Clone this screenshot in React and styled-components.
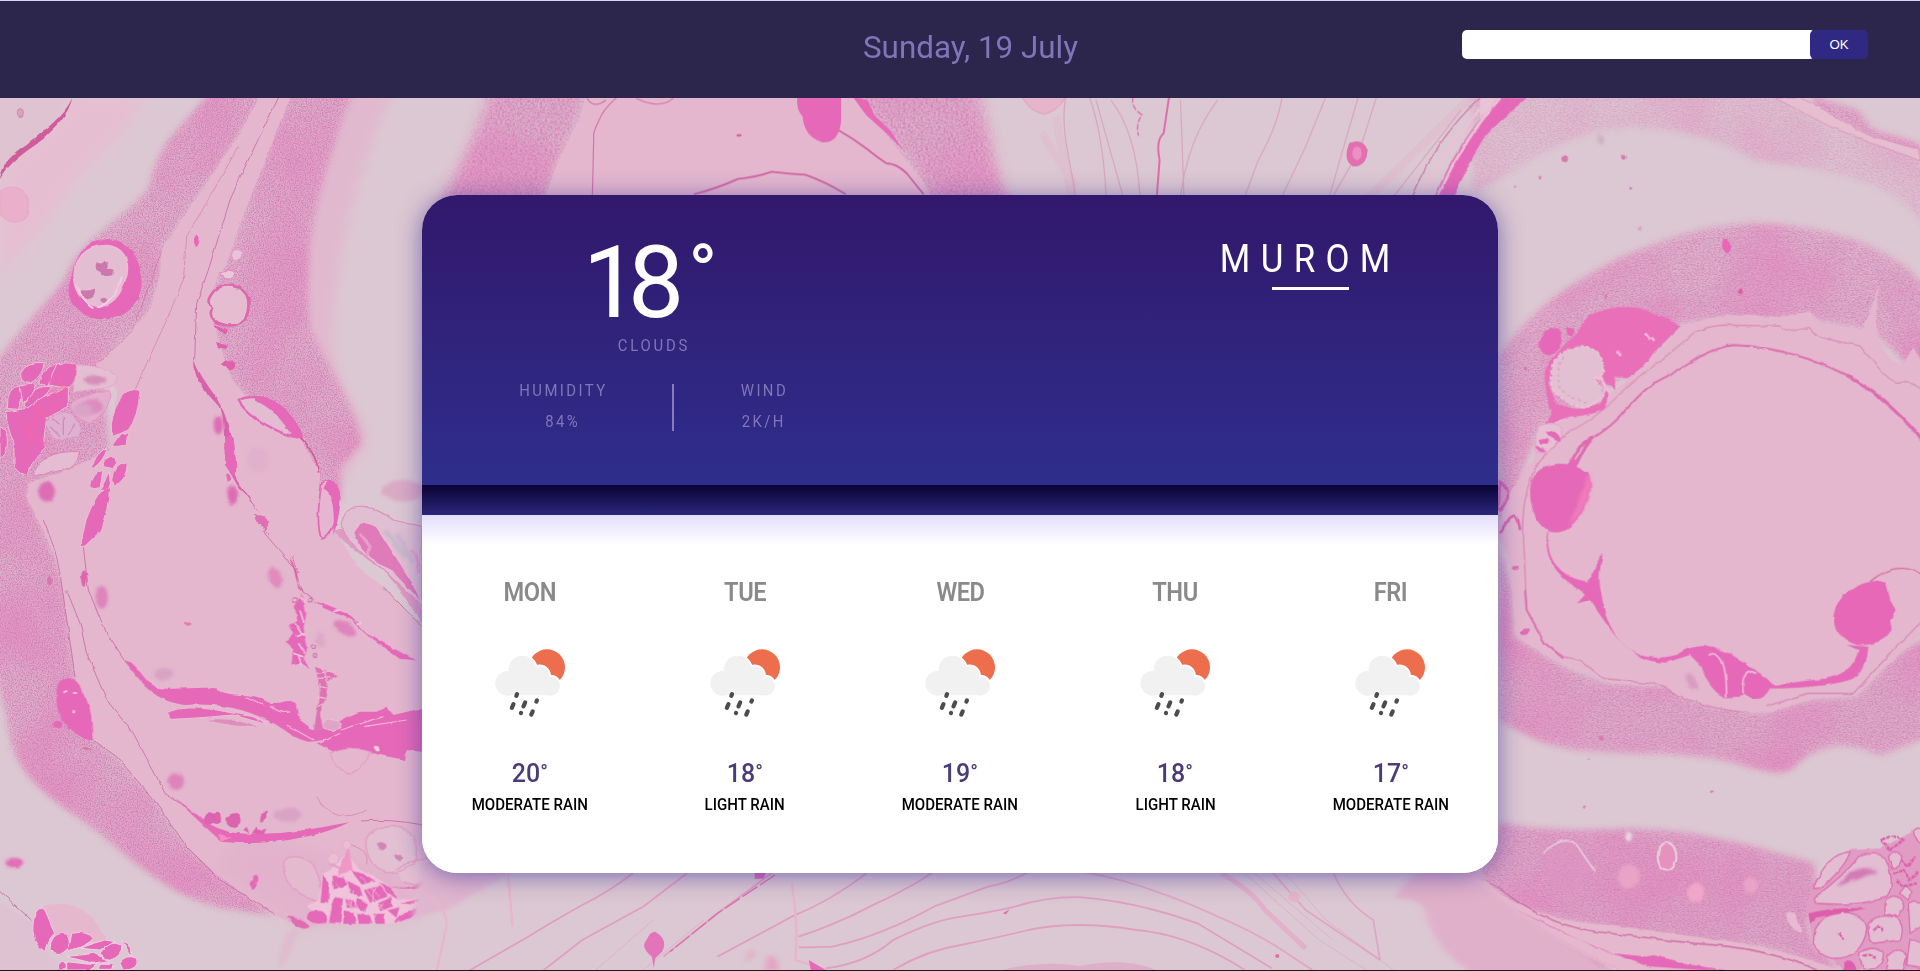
import React from "react";
import styled, { createGlobalStyle } from "styled-components";

const GlobalStyle = createGlobalStyle`
  * { box-sizing: border-box; }
  body { margin: 0; background: #1c1726; font-family: Roboto, "Liberation Sans", sans-serif; overflow: hidden; }
`;

const Page = styled.div`
  display: flex;
  flex-direction: column;
  height: 971px;
  border-bottom: 1px solid #1c1726;
`;

const Header = styled.header`
  display: grid;
  grid-template-columns: 863px 1fr auto;
  height: 98px;
  flex: none;
  padding-right: 52px;
  border-top: 1px solid #d6d7ee;
  background: #2c254c;
`;

const DateText = styled.div`
  grid-column: 2;
  padding-top: 26px;
  line-height: 40px;
  font-size: 32px;
  font-weight: 400;
  color: #7f75b8;
  white-space: nowrap;
  transform: scaleX(0.98);
  transform-origin: left;
`;

const Search = styled.form`
  display: flex;
  margin: 29px 0 0;
  height: 29px;
`;

const SearchInput = styled.input`
  width: 353px;
  margin-right: -5px;
  border: 0;
  border-radius: 5px;
  padding: 0 10px;
  background: #fff;
  outline: none;
`;

const SearchButton = styled.button`
  width: 58px;
  border: 0;
  border-radius: 5px;
  padding: 0;
  background: #2f2983;
  color: #fff;
  font: 400 13.3px "Liberation Sans", Arial, sans-serif;
  z-index: 1;
`;

const Main = styled.main`
  display: grid;
  grid-template-columns: 1fr;
  grid-template-rows: 872px;
  justify-items: center;
  > * { grid-area: 1 / 1; }
`;

const Backdrop = styled.svg`
  display: block;
  width: 1920px;
  height: 872px;
  path, ellipse, circle { vector-effect: non-scaling-stroke; }
`;

const Card = styled.section`
  width: 1076px;
  height: 678px;
  margin-top: 97px;
  border-radius: 35px;
  overflow: hidden;
  background: #fff;
  box-shadow: 0 3px 24px rgba(62, 52, 150, 0.62);
  z-index: 1;
`;

const Current = styled.div`
  display: flex;
  justify-content: space-between;
  height: 290px;
  background: linear-gradient(#32186c, #2e2e8c);
`;

const Now = styled.div`
  display: flex;
  flex-direction: column;
  align-items: center;
  width: 463px;
  padding-top: 38px;
`;

const BigTemp = styled.div`
  height: 100px;
  margin-right: 18px;
  font-size: 100px;
  line-height: 100px;
  letter-spacing: -11px;
  color: #fff;
`;

const Degree = styled.span`
  margin-left: 15px;
  font-size: 78px;
  line-height: 78px;
  vertical-align: 17px;
`;

const Label = styled.div`
  height: 20px;
  line-height: 20px;
  font-size: 16px;
  font-weight: 400;
  letter-spacing: 2.6px;
  color: #8276b8;
  text-transform: uppercase;
  transform: scaleX(0.93);
  white-space: nowrap;
`;

const Condition = styled(Label)`
  margin-top: 3px;
  letter-spacing: 3px;
`;

const Metrics = styled.div`
  display: flex;
  align-self: flex-start;
  margin: 25px 0 0 32px;
`;

const Metric = styled.div`
  display: flex;
  flex-direction: column;
  align-items: center;
  gap: 11px;
  width: ${(p) => p.$width}px;
`;

const Divider = styled.div`
  width: 2px;
  height: 47px;
  margin-top: 3px;
  background: #857bbd;
`;

const Place = styled.div`
  display: flex;
  flex-direction: column;
  align-items: center;
  width: 375px;
  padding-top: 44px;
`;

const City = styled.div`
  font-size: 38px;
  line-height: 41px;
  letter-spacing: 11.2px;
  color: #fff;
  transform: scaleX(0.92);
`;

const Underline = styled.div`
  width: 77px;
  height: 3px;
  margin-top: 7px;
  background: #fff;
`;

const Band = styled.div`
  height: 30px;
  background: linear-gradient(#0a0334, #2a277c);
`;

const Forecast = styled.div`
  display: grid;
  grid-template-columns: repeat(5, 1fr);
  height: 358px;
  padding-top: 62px;
  background: linear-gradient(#e3deff, #fff 30px);
`;

const Day = styled.div`
  display: flex;
  flex-direction: column;
  align-items: center;
  white-space: nowrap;
`;

const DayName = styled.div`
  line-height: 30px;
  font-size: 26px;
  font-weight: 600;
  letter-spacing: -0.5px;
  color: #8a8a8a;
  transform: scaleX(0.91);
`;

const IconFrame = styled.svg`
  width: 90px;
  height: 90px;
  margin-top: 33px;
`;

const DayTemp = styled.div`
  margin-top: 28px;
  line-height: 30px;
  font-size: 26px;
  font-weight: 500;
  color: #4b3b78;
  transform: scaleX(0.96);
`;

const SmallDegree = styled.span`
  font-size: 21px;
  line-height: 20px;
  vertical-align: 3px;
`;

const DayText = styled.div`
  margin-top: 7px;
  line-height: 20px;
  font-size: 16px;
  font-weight: 500;
  color: #000;
  transform: scaleX(0.94);
`;

const drops = [
  [95, 165, 5], [83, 198, 11], [118, 193, 12], [155, 183, 4], [108, 219, 1], [141, 219, 10],
];

function RainIcon() {
  return (
    <IconFrame viewBox="0 0 270 270">
      <circle cx="186" cy="82" r="54" fill="#ec6e4c" />
      <g fill="#f1f1f1" stroke="#fff" strokeWidth="5">
        <circle cx="196" cy="138" r="31" />
        <circle cx="164" cy="107" r="31" />
        <circle cx="113" cy="89" r="43" />
      </g>
      <g fill="#f1f1f1">
        <circle cx="196" cy="138" r="28" />
        <circle cx="164" cy="107" r="28" />
        <circle cx="112" cy="88" r="41" />
        <circle cx="68" cy="130" r="37" />
        <path d="M68 95h90l40 30v41H68z" />
      </g>
      <g stroke="#4c4c4c" strokeWidth="12.5" strokeLinecap="round">
        {drops.map(([x, y, l]) => (
          <path key={x} d={`M${x + l * 0.22} ${y - l / 2}L${x - l * 0.22} ${y + l / 2}`} />
        ))}
      </g>
    </IconFrame>
  );
}

const HOT = "#e569b8";
const PINK = "#e4b7ce";
const PALE = "#dcc8d2";

function Tissue() {
  return (
    <Backdrop viewBox="0 98 1920 872" preserveAspectRatio="none" aria-hidden="true">
      <defs>
        <filter id="grain" x="-5%" y="-5%" width="110%" height="110%" colorInterpolationFilters="sRGB">
          <feGaussianBlur in="SourceGraphic" stdDeviation="10" result="soft" />
          <feTurbulence type="fractalNoise" baseFrequency="0.27" numOctaves="2" seed="4" />
          <feColorMatrix values="0 0 0 0 0.83  0 0 0 0 0.5  0 0 0 0 0.71  3 0 0 0 -1.2" />
          <feComposite in2="soft" operator="in" result="dots" />
          <feTurbulence type="fractalNoise" baseFrequency="0.004" numOctaves="2" seed="9" />
          <feColorMatrix values="0 0 0 0 0.9  0 0 0 0 0.56  0 0 0 0 0.76  0 2 0 0 -0.8" />
          <feComposite in2="soft" operator="in" result="blotch" />
          <feMerge>
            <feMergeNode in="soft" />
            <feMergeNode in="blotch" />
            <feMergeNode in="dots" />
          </feMerge>
        </filter>
        <filter id="rough" x="-2%" y="-2%" width="104%" height="104%" colorInterpolationFilters="sRGB">
          <feTurbulence type="fractalNoise" baseFrequency="0.03" numOctaves="2" seed="7" />
          <feDisplacementMap in="SourceGraphic" scale="10" xChannelSelector="R" yChannelSelector="G" />
          <feGaussianBlur stdDeviation="0.9" />
        </filter>
        <filter id="soft" x="-30%" y="-30%" width="160%" height="160%"><feGaussianBlur stdDeviation="18" /></filter>
        <filter id="haze" x="-50%" y="-50%" width="200%" height="200%"><feGaussianBlur stdDeviation="5" /></filter>
      </defs>
      <rect x="0" y="98" width="1920" height="872" fill={PALE} />

      {/* left lobe */}
      <g transform="translate(0 90) scale(.33333)">
        <path d="M0 270L30 210L100 150L150 100L215 24H430C380 150 260 220 190 330C130 430 60 480 0 560Z" fill="#e5bfd1" filter="url(#soft)" />
        <path d="M0 0H215L150 100L100 150L30 210L0 270Z" fill="#dfc3d1" />
        <path d="M1080 0H1180C1080 230 1000 500 1000 760C1010 900 1090 960 1110 1060C1050 1120 1010 1200 1000 1300L700 900L650 700L640 590L870 0Z" fill="#e1b9ce" filter="url(#soft)" />
        <g filter="url(#grain)" fill="#dcb0ca">
          <path d="M640 0H800L720 130L580 340L490 470L480 560L450 660L380 740L300 815L330 1100L90 1180L80 1220L130 1320L165 1400L190 1500L215 1700L228 1770L280 1950L350 2000L470 2140L560 2270L660 2360L820 2475L650 2450C480 2400 380 2290 250 2190C110 2100 30 2020 20 1880L-20 1700V840C60 700 180 620 210 540C260 430 400 370 450 290C470 200 500 150 560 90Z" />
          <path d="M870 0H1060C960 260 900 480 930 720C1010 880 1070 960 1080 1060L1020 1130L1020 1230L960 1180L900 1045L740 920L690 860L650 740L640 590L690 490L760 290L830 120Z" />
        </g>
        <g filter="url(#rough)">
        <path d="M790 0H880L830 120L800 200L768 280L720 400L680 520L640 590L650 740L690 860L740 920L830 1000L900 1045L960 1150L955 1290L1010 1330L1070 1430L1150 1490L1290 1640V2360C1220 2390 1290 2480 1100 2490L900 2510L820 2475L660 2360L560 2270L470 2140L350 2000L280 1950L228 1770L215 1700L190 1500L165 1400L130 1320L80 1220L85 1180L180 1150L330 1080L350 900L290 825L380 740L450 660L480 560L484 480L580 340L720 130Z" fill={PINK} />
        <path d="M720 2250C900 2230 1000 2330 1200 2330L1266 2480L900 2510L800 2440L640 2330Z" fill="#e2b2cc" filter="url(#soft)" />
        <g fill="none" stroke="#c8669f" strokeWidth=".8">
          <path d="M835 24L740 220L690 330L625 540L590 640L584 810" />
          <path d="M715 170L630 320L560 440L550 570L500 690L440 820L405 900M300 815L400 720L485 480" opacity=".6" />
          <path d="M130 1290L165 1380L180 1450L225 1760M200 1500L240 1600L260 1690L320 1830L400 1930L470 2060L495 2110L540 2140" />
          <path d="M250 1370L265 1500L320 1630L375 1715M280 1950L350 2000L470 2140L560 2270L660 2370L820 2470M0 2405L100 2495" />
          <path d="M785 1320L880 1430L910 1510L990 1560L1080 1600M1080 2193Q1180 2186 1266 2205M1150 1490L1266 1610" />
          <path d="M1040 2260Q1110 2280 1100 2320M950 2120Q1000 2210 1100 2160" opacity=".6" />
        </g>
        <path d="M0 268C10 210 45 190 80 165C140 115 190 80 217 24C200 90 150 120 120 155C70 190 30 215 0 268Z" fill="#d15c9c" />
        <path d="M0 305C50 270 100 310 85 370C70 410 20 400 0 370Z" fill="#eab0cb" stroke="#e5abc8" strokeWidth="1.4" />
        <ellipse cx="61" cy="68" rx="9" ry="12" fill="#d9a3c0" stroke="#cb85ad" strokeWidth="1" />

        {/* vessels */}
        <path d="M320 450C390 450 430 510 424 590C415 660 360 690 300 688C240 680 200 640 206 590C225 530 230 450 320 450Z" fill={HOT} />
        <path d="M315 467C370 467 388 510 380 555C365 600 350 640 300 650C250 640 225 610 222 565C225 510 250 470 315 467Z" fill="#e3bdd1" stroke="#eebbd7" strokeWidth="2" />
        <path d="M290 520q20 10 22 -8q18 8 8 25q30 -5 18 18q-25 10 -38 -10q-20 -5 -10 -25ZM245 600q20 5 42 -5q5 30 -30 34q-25 -5 -12 -29M300 630q12 -14 22 0q-8 20 -22 0" fill="#cc78ad" />
        <path d="M365 560Q350 630 290 655M230 585Q250 640 280 655" fill="none" stroke="#f0cfe0" strokeWidth="2" />
        <path d="M640 605C660 575 735 580 745 630C750 690 720 710 680 706C640 700 625 675 636 655C615 635 630 620 640 605Z" fill="#e6bcd1" stroke="#df67ae" strokeWidth="2.6" />
        <circle cx="710" cy="494" r="16" fill="#e9c3d7" stroke="#e39cc5" strokeWidth="1.5" />
        <path d="M662 548C680 535 710 540 704 556C690 570 670 565 662 548Z" fill="#e9c9d9" stroke="#e08fbe" strokeWidth="1.3" />
        <ellipse cx="591" cy="454" rx="7" ry="17" fill={HOT} transform="rotate(12 591 454)" />
        <path d="M648 755l20 8l18 4l-12 12l-20 -4ZM665 820q20 -20 42 0q0 22 -22 20ZM640 700q30 15 45 18l-10 12q-25 -5 -35 -30" fill="#e060ae" />
        <path d="M715 930C760 910 830 925 870 980C900 1020 908 1035 905 1045C840 1035 740 980 715 930Z" fill="#e3bcd2" stroke={HOT} strokeWidth="2.4" />
        <path d="M765 918C830 915 900 990 906 1045L875 1038C850 990 810 950 765 932Z" fill={HOT} />
        <path d="M900 1045Q950 1090 955 1145" fill="none" stroke="#d8569f" strokeWidth="1.6" />
        <path d="M965 1180C990 1155 1025 1190 1018 1240C1010 1300 995 1330 965 1350C950 1310 955 1240 965 1180Z" fill="#e6b5cf" stroke={HOT} strokeWidth="1.8" />
        <path d="M985 1170C1030 1180 1025 1270 1000 1335C1003 1280 1005 1220 970 1195Z" fill={HOT} />

        {/* fibre bundle */}
        <g fill={HOT} stroke="#ecc0d7" strokeWidth="1">
          <path d="M62 850Q80 812 132 818Q130 860 90 880Q60 880 62 850Z" />
          <path d="M118 880Q130 830 170 820Q165 860 145 888Z" />
          <path d="M145 885L170 822Q220 812 234 830Q235 870 205 895Z" />
          <path d="M22 955Q20 890 65 885Q70 920 50 958Z" />
          <path d="M60 888Q100 880 110 885Q90 930 68 940Z" />
          <path d="M75 945Q100 880 155 890Q140 920 85 955Z" />
          <path d="M18 965L80 955L130 920L205 890L205 950L140 985L130 1060L140 1075L98 1115L85 1150Q60 1160 42 1130L42 1060Q20 1010 18 965Z" />
          <path d="M0 1010Q25 1020 22 1060Q20 1100 0 1104Z" />
          <path d="M370 910Q410 890 420 905Q415 980 385 1020L340 1040Q325 1010 345 960Z" />
          <path d="M340 1065l25 -35l18 5l-5 30l-30 5ZM312 1110l22 -12l18 18l-14 20l-24 -6ZM335 1170Q340 1120 382 1115Q380 1180 340 1186Z" />
          <path d="M275 1130Q300 1070 320 1075Q315 1110 278 1136ZM270 1195Q275 1150 310 1140L300 1190ZM300 1200l28 -52l2 25l-8 30Z" />
          <path d="M240 1370L258 1290Q290 1200 332 1190Q330 1260 300 1325L255 1368Z" />
        </g>
        <path d="M100 1010q20 -30 15 -70M90 1040q40 0 45 30M150 900q30 15 50 0M110 980q40 -15 60 -40M75 1000q20 20 10 60M180 850q-10 30 20 50" fill="none" stroke="#ff62a6" strokeWidth="2.5" opacity=".7" filter="url(#haze)" />
        <path d="M230 825Q310 825 352 860Q350 890 310 895L220 905Z" fill="#e4bfd1" stroke="#e9a7ca" strokeWidth="1" />
        <path d="M215 940Q250 905 330 905Q335 960 270 1000Q210 980 215 940Z" fill="#e3afcf" stroke="#e794c3" strokeWidth="1" />
        <ellipse cx="285" cy="870" rx="35" ry="14" fill="#d58cba" filter="url(#haze)" />
        <ellipse cx="275" cy="950" rx="35" ry="22" fill="#dd8dc0" filter="url(#haze)" />
        <path d="M100 1155Q120 1080 240 1085Q230 1130 190 1140Q140 1150 100 1158Z" fill="#e4bdd3" stroke="#e07fb8" strokeWidth="1" />
        <path d="M135 1000Q170 960 210 970Q250 1000 235 1040Q200 1050 160 1045Z" fill="#dfb0cf" />
        <path d="M150 1010l30 30M190 980l0 55M225 1000l-20 35M160 985l20 20" stroke="#d287b8" strokeWidth="1.2" />
        <g fill="#dd6cb3" filter="url(#haze)">
          <ellipse cx="140" cy="1205" rx="25" ry="30" /><ellipse cx="655" cy="1005" rx="14" ry="28" />
          <ellipse cx="697" cy="1215" rx="17" ry="28" /><ellipse cx="305" cy="1522" rx="18" ry="34" opacity=".7" />
          <ellipse cx="527" cy="2075" rx="25" ry="25" opacity=".7" /><ellipse cx="826" cy="1464" rx="20" ry="32" transform="rotate(-25 826 1464)" opacity=".6" />
          <ellipse cx="1035" cy="1615" rx="38" ry="18" transform="rotate(30 1035 1615)" opacity=".7" />
        </g>
        <g fill="#d9a3c6" filter="url(#haze)">
          <ellipse cx="492" cy="1752" rx="30" ry="18" /><ellipse cx="862" cy="2175" rx="42" ry="20" />
          <ellipse cx="962" cy="1650" rx="14" ry="22" opacity=".7" /><ellipse cx="775" cy="1110" rx="32" ry="38" opacity=".3" />
          <ellipse cx="1210" cy="1202" rx="65" ry="32" fill="#dbaac5" /><ellipse cx="250" cy="960" rx="28" ry="20" />
        </g>
        <path d="M583 810C600 870 660 920 680 990C700 1050 700 1130 710 1170L780 1270L715 1190L680 1130C668 1080 678 1010 662 955C620 905 580 880 583 810Z" fill="#d862ab" />
        <path d="M675 1040Q700 1020 705 1080Q712 1150 705 1165L675 1125ZM678 1150q15 0 15 20l-10 5Z" fill={HOT} />
        <path d="M765 1275l25 5l15 15l-8 25l-15 -15l-18 -18ZM790 1320l20 15M880 1400l15 50" fill="#df6fb3" stroke="#df6fb3" strokeWidth="1.2" strokeDasharray="2 1" />
        <path d="M1000 1320Q1040 1370 1150 1440L1200 1500L1266 1600V1560L1230 1500L1190 1440Q1170 1370 1110 1320Z" fill="#df9ac3" />
        <path d="M1022 1310Q1035 1240 1095 1250Q1140 1260 1180 1290L1266 1310V1550L1140 1430Q1050 1370 1022 1310Z" fill="#dfbfd1" stroke="#e18fbe" strokeWidth="1.2" />
        <path d="M1060 1325Q1080 1280 1130 1310L1150 1340L1240 1480L1266 1540L1170 1440Q1080 1400 1060 1325Z" fill="#e07bba" stroke="#e9bcd5" strokeWidth="1.5" />
        <path d="M1155 1320l60 80M1190 1330l50 90" stroke="#cbb7cb" strokeWidth="5" filter="url(#haze)" />
        <path d="M1080 1330l30 40l-12 30M1235 1380q25 20 20 70" stroke="#e9a0cb" strokeWidth="3" fill="none" />

        {/* lower strands */}
        <path d="M370 1712C420 1715 420 1775 480 1795C540 1800 600 1790 640 1795C700 1830 750 1800 800 1835C840 1850 860 1820 890 1840L900 1890L940 1920C990 1920 1030 1880 1080 1865L1130 1865L1160 1850L1180 1875L1266 1855V1985L1220 1980L1215 2010L1140 1995L1080 1980L1000 1985L950 1960L990 1948L930 1955C880 1950 850 1910 800 1890C720 1850 640 1840 560 1845C480 1840 430 1790 400 1750Z" fill={HOT} />
        <path d="M502 1865Q560 1845 650 1860Q700 1870 760 1880L805 1905L700 1875Q590 1885 510 1888Z" fill={HOT} stroke="#ecbfd7" strokeWidth="1" />
        <path d="M990 1990Q1040 1960 1110 1985Q1100 2030 1050 2052Q1000 2040 990 1990Z" fill={PINK} stroke="#e493c2" strokeWidth="1" />
        <path d="M680 1805l55 10M740 1820l50 25M860 1905l80 45M1020 1920l130 -40M1090 1910l130 -20M810 1845q30 30 60 20M600 1850q120 0 220 60M960 1960l60 -30" fill="none" stroke="#eeb8d5" strokeWidth="1.2" />
        <ellipse cx="995" cy="1905" rx="28" ry="16" fill="#dfa5c7" stroke="#edc3da" strokeWidth="1" />
        <circle cx="1130" cy="1976" r="8" fill="#ecd0de" />
        <path d="M620 1890Q700 1880 770 1912Q700 1910 620 1890Z" fill="#dd8ebd" />
        <path d="M905 1510l15 60l-8 45l12 60l-12 30l18 35l-32 -20l-25 5l5 -50l-22 -20l25 -25l-15 -25l25 -15l-8 -40ZM940 1530L1040 1570L1100 1630L1210 1690L1250 1712L1200 1708L1110 1645L1050 1590L970 1555Z" fill={HOT} stroke="#ebb4d2" strokeWidth=".7" />
        <path d="M900 1560l12 40M885 1600l22 35M895 1660l20 30M880 1690l30 10M900 1520l15 20M890 1640l25 -10M905 1725l-10 -30M1000 1565l20 -5M1070 1605l15 -10" stroke="#eec8dc" strokeWidth="1.6" />
        <path d="M945 1730L1010 1755L985 1775L975 1830L960 1870L970 1920L940 1925L955 1840L955 1770Z" fill="#de72b4" />
        <path d="M950 1750l55 -10M955 1765l40 -2M965 1735l20 45M960 1790l20 3M950 1820l25 5M955 1850l15 -8M960 1780l-5 60" stroke="#ecbbd5" strokeWidth="1.2" />
        <path d="M870 1400Q895 1430 893 1480L912 1512L895 1495L880 1430Z" fill="#d95fa8" />
        <g fill="none" stroke="#d178ac" strokeWidth="1.2"><circle cx="885" cy="1530" r="7" /><circle cx="940" cy="1670" r="6" /><circle cx="945" cy="1698" r="5" /><circle cx="930" cy="1530" r="6" /></g>
        <path d="M170 1800Q175 1765 210 1765Q235 1770 245 1800Q275 1850 275 1900L278 1950Q250 1955 200 1905Q165 1880 170 1800Z" fill={HOT} />
        <path d="M190 1808l12 -6M222 1809l12 0M217 1867l8 0" stroke="#f3b9dc" strokeWidth="2" />
        <ellipse cx="173" cy="1903" rx="14" ry="10" fill={HOT} /><ellipse cx="260" cy="1978" rx="15" ry="4" fill="#db70b1" />
        <ellipse cx="252" cy="1467" rx="9" ry="26" fill="#e163ae" /><ellipse cx="563" cy="1602" rx="11" ry="5" fill="#e57ab9" />
        <ellipse cx="149" cy="1472" rx="7" ry="14" fill="#d875ae" />
        <path d="M525 2125C590 2165 620 2215 700 2228C810 2240 930 2220 1050 2196C940 2250 780 2268 665 2255Q590 2190 525 2125Z" fill={HOT} />
        <g fill="#dd62b0"><ellipse cx="628" cy="2185" rx="18" ry="18" /><ellipse cx="650" cy="2185" rx="16" ry="17" /><ellipse cx="702" cy="2192" rx="23" ry="22" /><path d="M730 2220l10 -10l8 20M755 2230l15 -20l10 15l20 -10l-10 20ZM780 2190l5 -20l20 -10l-18 40Z" /></g>
        <path d="M665 2255l30 -12l-38 -12Z" fill="#ff9cc0" opacity=".7" />

        {/* cell cluster */}
        <path d="M880 2300C940 2300 965 2350 965 2440Q930 2430 900 2410Q850 2380 850 2330Q850 2300 880 2300Z" fill="#e4bacf" stroke="#e290be" strokeWidth="1" />
        <path d="M1100 2240Q1160 2190 1220 2220Q1265 2260 1240 2320Q1180 2370 1130 2330Q1090 2300 1100 2240ZM1190 2340Q1240 2300 1290 2310V2380L1210 2380" fill="#e2bfd1" stroke="#e098c1" strokeWidth="1.1" />
        <path d="M1130 2260q25 -15 30 10q-15 25 -30 -10M1180 2300q20 -10 30 0l-10 15ZM1190 2250l15 8M1160 2295l15 8" fill="#d286b5" />
        <path d="M1150 2385Q1240 2410 1290 2350V2380Q1230 2410 1150 2385Z" fill="#de70b1" />
        <path d="M990 2340L1040 2290L1080 2340L1140 2370L1200 2430L1275 2425L1200 2500L1000 2500L920 2450L955 2430L970 2350Z" fill="#f0c3da" />
        <g fill={HOT} stroke="#efc5dc" strokeWidth=".8">
          <path d="M915 2480Q920 2455 965 2462Q990 2475 980 2500Q930 2510 915 2480Z" />
          <path d="M985 2500L1000 2420L1030 2425L1022 2502ZM968 2350L990 2380L985 2440L960 2440ZM996 2355L1030 2360L1045 2385L1000 2400ZM1050 2340L1090 2350L1130 2375L1085 2385ZM1040 2370L1080 2390L1090 2420L1050 2410ZM1030 2460L1060 2465L1070 2503L1028 2503ZM1035 2425L1060 2430L1075 2455L1040 2455ZM1090 2400L1140 2385L1165 2420L1110 2440ZM1070 2420L1105 2440L1095 2470L1065 2450ZM1130 2440L1175 2420L1180 2450L1140 2465ZM1070 2470L1110 2475L1120 2503L1075 2503ZM1120 2470L1155 2470L1155 2503L1125 2503ZM1160 2460L1200 2450L1190 2485ZM1180 2500Q1190 2465 1255 2455Q1250 2490 1180 2500ZM1195 2440L1275 2422L1240 2445ZM1135 2375L1180 2395L1195 2430L1160 2410Z" />
        </g>
        <path d="M1040 2440l50 30M1100 2400l50 60M1060 2400l-10 60M1130 2380l-20 80M1080 2360l60 60M1150 2440l-40 60M1010 2380l40 60" stroke="#efc5dc" strokeWidth=".8" />
        <path d="M860 2480Q900 2480 930 2510Q900 2530 860 2480Z" fill="#e06cb3" />
        <path d="M1045 2280l10 60l-40 10ZM990 2320l40 20" fill="#ee98c6" stroke="#ee98c6" strokeWidth="2" />
        <circle cx="1002" cy="2305" r="16" fill="#e8bfd3" stroke="#e9a6c9" strokeWidth="1" /><circle cx="1040" cy="2265" r="13" fill="#e8bfd3" stroke="#e9a6c9" strokeWidth="1" />
        <ellipse cx="767" cy="2366" rx="8" ry="11" fill={HOT} /><ellipse cx="758" cy="2385" rx="9" ry="14" fill={HOT} />
        <path d="M840 2640Q830 2570 870 2520L900 2515Q880 2580 840 2640Z" fill="#dfbccd" filter="url(#haze)" />
        <path d="M0 2440L100 2500L150 2600L200 2640H0Z" fill="#dec2d1" />
        <path d="M125 2455C210 2410 300 2480 320 2560L180 2540L100 2500Z" fill="#e5b8ce" />
        <g fill={HOT} stroke="#efd0e0" strokeWidth="1">
          <path d="M105 2470Q120 2445 135 2460L165 2530Q140 2550 135 2585Q90 2560 100 2490Z" />
          <path d="M150 2580Q150 2530 190 2530Q215 2530 205 2575Q170 2610 150 2580Z" />
          <path d="M205 2580L215 2530Q260 2520 280 2545Q260 2570 205 2582Z" />
          <path d="M240 2575L310 2550L345 2555L300 2580ZM300 2590Q330 2545 365 2565Q370 2600 325 2612ZM365 2550Q400 2570 395 2600ZM200 2600L280 2590L330 2612L280 2620ZM200 2615L290 2625L270 2640L200 2640ZM360 2620Q380 2590 410 2605Q420 2640 370 2640ZM175 2625Q190 2600 200 2630L190 2640L175 2640ZM300 2620l40 0l-5 18l-40 0Z" />
        </g>
        <ellipse cx="43" cy="2318" rx="27" ry="14" fill={HOT} filter="url(#haze)" /><ellipse cx="43" cy="2319" rx="20" ry="10" fill="#e270b7" />
        </g>
      </g>

      {/* upper middle */}
      <g transform="translate(420 0) scale(.67606 .33333)">
        <g filter="url(#grain)" fill="#dcafca">
          <path d="M110 240H250L240 330L225 400L205 480L180 620H30C60 500 90 400 110 240Z" />
          <path d="M640 240H820L835 370L850 500L870 640H770L745 550L700 430L655 330Z" />
        </g>
        <path d="M245 290H640L660 330L700 430L745 550L765 620H180L205 480L235 360Z" fill={PINK} />
        <path d="M558 290H623V360Q620 430 595 427Q568 410 566 350Q556 330 558 290Z" fill={HOT} />
        <path d="M640 290L662 300L672 345L695 390L715 450L690 400L660 345Z" fill="#e768b4" />
        <path d="M620 392Q640 415 660 445Q675 470 690 490Q705 490 720 520L745 583M405 583Q440 565 470 537Q500 530 520 515Q550 522 570 524Q600 545 630 583" fill="none" stroke="#d065a3" strokeWidth="1.8" />
        <path d="M292 290Q270 330 265 360Q255 400 257 410L255 585M246 290Q255 330 275 300M320 295Q355 330 375 294" fill="none" stroke="#d374aa" strokeWidth="1.2" />
        <circle cx="472" cy="406" r="4" fill="#df5da8" />
        <path d="M890 290Q905 340 925 342Q945 330 955 290Z" fill="#e6b5ca" stroke="#e09cbc" strokeWidth="1" />
        <path d="M940 350L965 600M920 400L970 560M1560 280L1400 600" stroke="#e3b7ca" strokeWidth="8" opacity=".45" />
        <g fill="none" stroke="#d8a0bb" strokeWidth="1.3" opacity=".8">
          <path d="M955 290Q950 350 955 420L970 590M990 290Q1010 400 1015 590M1022 300Q1060 400 1065 590M1125 300L1130 590M1180 300Q1135 420 1125 590M1275 290Q1270 370 1240 480L1220 590M1340 290L1310 440L1275 590M1388 290L1365 450L1345 590M1415 290L1390 450L1350 590M1540 330L1440 590M1000 300L1040 590" />
        </g>
        <path d="M1055 290Q1050 320 1068 345Q1058 370 1063 408" fill="none" stroke="#dd7eb2" strokeWidth="1.6" strokeDasharray="6 2" />
        <path d="M1108 290L1100 400Q1088 420 1094 480L1090 585" fill="none" stroke="#df6dac" strokeWidth="2" />
        <path d="M1375 430Q1395 415 1401 450Q1400 500 1380 498Q1365 480 1375 430Z" fill="#e66db1" stroke="#cf77a9" strokeWidth="1" />
        <ellipse cx="1386" cy="460" rx="7" ry="20" fill="#eb91c2" />
      </g>

      {/* right lobe */}
      <g transform="translate(1480 90) scale(.33333)">
        <g filter="url(#grain)">
          <path d="M-20 0H880L1000 90L1200 160L1340 220V410C1240 260 1000 230 820 210C700 130 540 110 440 110C260 120 130 230 -20 310Z" fill="#ddc2d1" opacity=".5" />
          <path d="M60 800C150 650 330 540 480 480C620 420 760 390 900 405C1100 420 1260 490 1340 600V870L1280 820L1180 720L1000 690L740 680L600 700L440 850L180 1010L120 1150L100 1320L60 1340Z" fill="#ddb7cd" />
          <path d="M60 1380L95 1500L100 1640L250 1730L380 1780L560 1790L640 1830L850 1870L1000 1830L1130 1820L1220 1720L1340 1640V1940L1200 1995C1120 1960 1050 1950 960 2010C920 2060 880 2050 780 2020C600 1970 350 2000 250 1970C180 1960 120 1920 60 1890Z" fill="#ddafca" />
          <path d="M-20 2400L60 2200C160 2220 240 2225 400 2220C560 2210 720 2240 1000 2320L1010 2400L980 2500L1000 2570L1080 2640L850 2570L440 2530L250 2490L100 2440L0 2360Z" fill="#dcaac8" />
          <path d="M-20 2390L140 2500L400 2640H-20Z" fill="#dda9c8" />
          <path d="M1000 20L1130 60L1180 120L1320 165V200L1180 150L1000 60Z" fill="#ddb0ca" />
          <path d="M1180 720L1200 600Q1260 800 1340 850V740L1300 600L1200 520ZM320 660Q600 560 900 680L600 700Z" fill="#dfa6c7" opacity=".5" />
        </g>
        <g filter="url(#rough)">
        <path d="M0 24H50Q20 70 0 90Z" fill="#e8c5d5" />
        <path d="M-140 330C-90 210 -30 110 60 24H140C80 80 20 120 -10 180L-90 340Z" fill={HOT} />
        <path d="M-175 320Q-90 150 30 24M-130 330Q-60 160 60 24" fill="none" stroke="#ebc1d5" strokeWidth="3" />
        <path d="M-210 330Q-130 140 0 24" fill="none" stroke="#cf6ea6" strokeWidth="1.2" />
        <path d="M885 24H960C1050 60 1150 140 1200 145L1320 180V212L1190 165L1050 110Z" fill="#e5bed0" stroke="#e093be" strokeWidth="1" />
        <path d="M60 1900L55 1300Q90 1180 160 1110L170 1020Q300 980 380 920L450 860Q550 770 610 705L740 675L890 680L990 665L1030 705L1150 715L1200 580Q1180 680 1195 740Q1230 830 1270 820L1300 770L1340 850V1620L1270 1680L1220 1730L1130 1810L1070 1820L1000 1825L860 1868L700 1855L600 1820L560 1790L400 1780L320 1750L220 1710L110 1640L100 1540L85 1400L55 1340Z" fill={PINK} />
        <g fill="none" stroke="#d278ac" strokeWidth="1.1">
          <path d="M260 1030Q360 980 440 890Q560 800 640 730Q680 708 730 705L900 708Q930 730 950 720L990 712Q1005 745 1030 745L1140 768L1200 840Q1230 870 1250 880Q1300 870 1330 905" opacity=".7" />
          <path d="M128 1330Q125 1200 180 1110L260 1030M130 1330L140 1560L195 1660L250 1700L300 1710L370 1765L540 1785Q640 1850 780 1865M860 1850L980 1810L1120 1810L1240 1680L1330 1590" opacity=".8" />
        </g>
        <path d="M290 1110L330 1050Q380 1020 420 980Q480 910 520 880Q600 840 660 800Q720 770 760 765C900 770 1070 820 1200 920Q1270 980 1340 1065" fill="none" stroke="#dd70b0" strokeWidth="2" />
        <path d="M1100 855Q1160 890 1200 925Q1270 980 1340 1065M270 1120L300 1070L340 1040L310 1080L290 1120Z" fill="none" stroke="#dd6cb0" strokeWidth="3" />
        <path d="M320 680Q400 640 480 655Q560 680 600 710L520 790Q480 850 440 865L405 860L405 900L370 870L350 790L290 765L230 810L205 880L230 940Q300 970 360 940Q385 900 370 870Q400 920 370 960Q320 980 270 980L195 1003L215 960Q190 900 195 840Q230 780 290 730Z" fill="#ea6fb9" />
        <path d="M235 800Q290 750 350 785Q385 830 360 860L340 870L375 900Q370 940 310 952Q240 940 215 890Q205 840 235 800Z" fill="#e2bfd1" stroke="#edc4d9" strokeWidth="2" strokeDasharray="4 2" />
        <path d="M250 800Q225 840 240 890Q270 930 320 935M360 880l10 30" fill="none" stroke="#dfa0c4" strokeWidth="1.5" strokeDasharray="3 3" />
        <path d="M410 780l12 18M495 730l15 18M515 742l8 10M340 865l25 0l20 40" stroke="#f7bcdc" strokeWidth="2.5" fill="none" />
        <path d="M175 760Q190 710 235 715Q260 740 230 785Q190 815 175 760ZM258 712L282 715L275 740L262 735Z" fill={HOT} />
        <path d="M170 1010Q250 980 245 1040L200 1090L165 1085Z" fill="#e7bfd4" stroke="#e2a2c4" strokeWidth="1" />
        <g fill={HOT}><path d="M195 1022Q240 1020 242 1055Q210 1050 195 1022ZM165 1068Q200 1070 200 1085Q175 1092 165 1068Z" /><ellipse cx="193" cy="1054" rx="14" ry="7" /></g>
        <path d="M210 1125Q270 1110 325 1150Q345 1200 310 1260Q270 1340 210 1325Q150 1290 150 1200Q155 1140 210 1125ZM270 1130l-2 -25l25 5l-5 35Z" fill={HOT} />
        <path d="M325 1150Q345 1200 310 1260Q290 1290 265 1310Q300 1220 325 1150Z" fill="#f07cba" filter="url(#haze)" />
        <path d="M60 1175Q95 1200 78 1240Q65 1265 55 1260ZM60 1330Q110 1230 120 1320" fill="none" stroke="#d866ad" strokeWidth="2.6" />
        <path d="M205 1320C195 1400 230 1440 280 1465L320 1475Q350 1450 355 1400L368 1395Q355 1450 360 1490L375 1570Q390 1610 410 1640C460 1710 530 1710 590 1695C620 1670 660 1665 700 1670Q750 1690 800 1720L860 1765L880 1785L1040 1765Q1120 1750 1135 1680L1100 1665L1165 1670Q1160 1740 1120 1765Q1060 1790 900 1795L870 1795Q840 1850 795 1810L780 1820L730 1822Q680 1790 665 1730L630 1695L560 1717C490 1720 440 1680 400 1630L360 1575L330 1530L290 1540L315 1515L300 1500C220 1450 190 1400 202 1320Z" fill={HOT} />
        <path d="M683 1695Q740 1670 740 1820M790 1810Q780 1750 815 1745L830 1750" fill="none" stroke="#efbad8" strokeWidth="1.8" />
        <path d="M1220 1480L1230 1530L1247 1560L1230 1590L1235 1620Q1200 1670 1130 1665Q1060 1640 1060 1580Q1070 1510 1150 1480Q1200 1465 1220 1480Z" fill="#e668b7" />
        <path d="M1170 1475Q1260 1400 1340 1465" fill="none" stroke="#d26ba5" strokeWidth="1.4" />
        <ellipse cx="635" cy="1775" rx="14" ry="28" fill="#d99cc2" transform="rotate(-30 635 1775)" filter="url(#haze)" />
        <path d="M135 1500L140 1560L195 1660L250 1705" fill="none" stroke="#dd72b2" strokeWidth="2" />
        <ellipse cx="135" cy="1625" rx="17" ry="9" fill={HOT} transform="rotate(-18 135 1625)" /><ellipse cx="106" cy="1434" rx="10" ry="6" fill="#dd6eb0" />
        <ellipse cx="740" cy="468" rx="14" ry="22" fill="#e767b4" /><circle cx="783" cy="604" r="8" fill="#e05ba6" />
        <g fill="#d979af"><circle cx="254" cy="206" r="10" /><circle cx="430" cy="202" r="7" /><circle cx="182" cy="263" r="5" /><circle cx="449" cy="295" r="4" /><circle cx="105" cy="290" r="3" /><circle cx="482" cy="415" r="6" opacity=".5" /><circle cx="376" cy="618" r="5" /><circle cx="364" cy="1943" r="7" /><circle cx="316" cy="2148" r="4" /><circle cx="697" cy="2105" r="4" /><circle cx="326" cy="2007" r="3" /><circle cx="136" cy="835" r="5" /></g>
        <ellipse cx="362" cy="150" rx="11" ry="15" fill="#cfb3c3" filter="url(#haze)" />

        {/* bottom bands */}
        <path d="M190 2290L265 2255L300 2270L345 2350Q310 2410 230 2400Q180 2360 190 2290Z" fill="#dd92c1" opacity=".45" />
        <path d="M190 2290Q250 2230 290 2265L345 2345" fill="none" stroke="#e6c2d6" strokeWidth="2" />
        <ellipse cx="561" cy="2300" rx="28" ry="42" fill="#e593be" stroke="#e9cad8" strokeWidth="2.2" />
        <g fill="#e9a3c6" filter="url(#haze)"><ellipse cx="446" cy="2360" rx="32" ry="38" /><ellipse cx="648" cy="2408" rx="27" ry="30" fill="#f1a6c9" /><ellipse cx="812" cy="2385" rx="22" ry="25" /><ellipse cx="446" cy="2240" rx="10" ry="15" fill="#ead5df" /></g>
        <path d="M915 2470Q950 2450 965 2530Q930 2520 915 2470Z" fill="#e8b9d2" />
        <path d="M-30 2355L90 2430Q220 2500 400 2505L640 2540Q850 2560 1080 2640H420L260 2570L100 2500L-30 2410Z" fill="#e6b8ce" />
        <path d="M-30 2350L60 2395Q180 2500 350 2525L640 2560Q850 2570 1010 2640" fill="none" stroke="#cd6ca5" strokeWidth="1.3" />
        <path d="M100 2455Q260 2540 400 2590L500 2600L520 2595L640 2625L740 2640H660L500 2628L340 2570Z" fill={HOT} />
        <path d="M-30 2410L260 2560L420 2640" fill="none" stroke="#ecabc9" strokeWidth="1.4" />

        <path d="M990 2400Q1040 2300 1110 2280L1200 2275L1270 2240L1340 2200V2640H1090L1000 2560L980 2450Z" fill="#e19cc4" />
        <g fill="#e3bdd2" stroke="#df6fb0" strokeWidth="1.3">
          <path d="M1000 2395Q1040 2290 1110 2285Q1100 2320 1050 2370Q1020 2400 1000 2395Z" />
          <path d="M1000 2425Q1100 2350 1135 2300Q1190 2280 1215 2305Q1250 2380 1220 2420Q1150 2450 1010 2440Z" />
          <path d="M1000 2560Q1000 2480 1080 2465Q1160 2470 1160 2520Q1150 2580 1100 2600Q1030 2620 1000 2560Z" />
          <path d="M1165 2500Q1190 2470 1240 2480Q1280 2500 1260 2550L1180 2560Q1160 2540 1165 2500ZM1215 2430Q1260 2400 1275 2450L1250 2480L1215 2470ZM1135 2590Q1180 2560 1210 2590Q1210 2640 1150 2640ZM1220 2600Q1260 2560 1280 2600L1270 2640H1220ZM1285 2440Q1330 2410 1340 2500L1290 2530ZM1225 2300q20 -30 40 0q0 30 -30 35ZM1300 2220q30 -30 30 40q-25 5 -30 -40ZM1258 2410l20 -25l15 18l-12 28ZM1290 2545l50 20v70l-60 -10Z" />
        </g>
        <path d="M1070 2390Q1130 2310 1195 2345Q1130 2370 1070 2390Z" fill="#d27bb5" filter="url(#haze)" />
        <path d="M985 2470Q1060 2450 1160 2455L1010 2485L990 2500ZM1090 2615Q1120 2600 1130 2640H1090Z" fill="#dd5fac" />
        <path d="M1205 2250Q1240 2230 1270 2250L1230 2280ZM1240 2350l30 -10l20 30l25 -25M1250 2370l20 20l40 -10M1265 2310l20 20l20 -30M1180 2520q20 -25 30 5M1075 2530l15 20M1150 2600q20 -15 35 5" fill="none" stroke="#df5fac" strokeWidth="2.4" strokeDasharray="4 1" />
        </g>
      </g>

      {/* lower middle */}
      <g transform="translate(420 860) scale(.67606 .33333)">
        <path d="M0 0H160Q100 80 40 150L-10 170Z" fill="#dfb5cf" filter="url(#haze)" />
        <path d="M1480 30Q1445 90 1443 115Q1485 110 1490 180Q1510 290 1560 340L1760 340L1600 120L1560 20Z" fill="#e0b0ca" filter="url(#haze)" />
        <g fill="none" stroke="#df9fc1" strokeWidth="1.8">
          <path d="M315 40Q280 95 240 135Q200 180 160 230L70 335M395 40L330 140L240 240L180 335M520 40L440 160L360 290M660 40Q610 120 550 170L440 290M760 35Q720 90 675 130Q620 190 560 230M900 35Q870 70 840 80L760 140Q680 230 610 260Q590 262 560 262M600 325Q660 310 700 240Q760 180 800 170Q850 155 880 140Q930 108 980 112Q1060 125 1150 190L1260 325M700 330Q750 270 800 255Q860 230 900 210Q970 180 1060 210Q1140 225 1220 330" />
          <path d="M980 35Q1030 55 1060 75Q1130 120 1180 170Q1240 220 1290 290L1320 330M1260 35L1310 150L1420 300M1350 35Q1370 130 1410 180L1420 300" opacity=".8" />
          <path d="M1280 40L1340 180L1440 330M1220 40L1330 240L1400 330M1235 40L1350 240M345 180L260 330M420 180L330 330" strokeWidth=".8" opacity=".7" />
          <path d="M130 40L137 200M10 100Q45 150 38 210L25 330M550 70Q560 200 555 300L600 330" strokeWidth="2.4" stroke="#e8b5cb" />
        </g>
        <path d="M1185 40Q1230 90 1250 150L1310 265" fill="none" stroke="#e5a5c6" strokeWidth="5" opacity=".7" />
        <path d="M525 45L440 160L370 275" fill="none" stroke="#dd70ae" strokeWidth="1.4" strokeDasharray="18 3" />
        <path d="M860 330Q920 300 975 318Q1040 290 1090 330Z" fill="#deb0c8" />
        <path d="M348 215Q368 240 358 275L348 295L346 325L343 290Q325 260 335 240Q340 215 348 215Z" fill="#e474ba" />
        <path d="M495 38L512 38L508 56L495 56ZM862 160l10 -12l-5 15ZM575 300l25 30h-22Z" fill={HOT} />
        <path d="M515 285q15 0 15 45h-20ZM490 265q10 20 -8 40" fill="#e5a3c4" filter="url(#haze)" />
        <ellipse cx="1293" cy="110" rx="9" ry="16" fill="#e4b7cc" /><ellipse cx="1268" cy="288" rx="3" ry="6" fill="#e76cae" />
      </g>
    </Backdrop>
  );
}

const days = [
  ["Mon", 20, "Moderate rain"],
  ["Tue", 18, "Light rain"],
  ["Wed", 19, "Moderate rain"],
  ["Thu", 18, "Light rain"],
  ["Fri", 17, "Moderate rain"],
];

export default function App() {
  return (
    <Page>
      <GlobalStyle />
      <Header>
        <DateText>Sunday, 19 July</DateText>
        <Search onSubmit={(e) => e.preventDefault()}>
          <SearchInput aria-label="City" />
          <SearchButton>OK</SearchButton>
        </Search>
      </Header>
      <Main>
        <Tissue />
        <Card>
          <Current>
            <Now>
              <BigTemp>18<Degree>°</Degree></BigTemp>
              <Condition>CLOUDS</Condition>
              <Metrics>
                <Metric $width={218}>
                  <Label>HUMIDITY</Label>
                  <Label>84%</Label>
                </Metric>
                <Divider />
                <Metric $width={180}>
                  <Label>WIND</Label>
                  <Label>2K/H</Label>
                </Metric>
              </Metrics>
            </Now>
            <Place>
              <City>MUROM</City>
              <Underline />
            </Place>
          </Current>
          <Band />
          <Forecast>
            {days.map(([name, temp, text]) => (
              <Day key={name}>
                <DayName>{name.toUpperCase()}</DayName>
                <RainIcon />
                <DayTemp>{temp}<SmallDegree>°</SmallDegree></DayTemp>
                <DayText>{text.toUpperCase()}</DayText>
              </Day>
            ))}
          </Forecast>
        </Card>
      </Main>
    </Page>
  );
}
